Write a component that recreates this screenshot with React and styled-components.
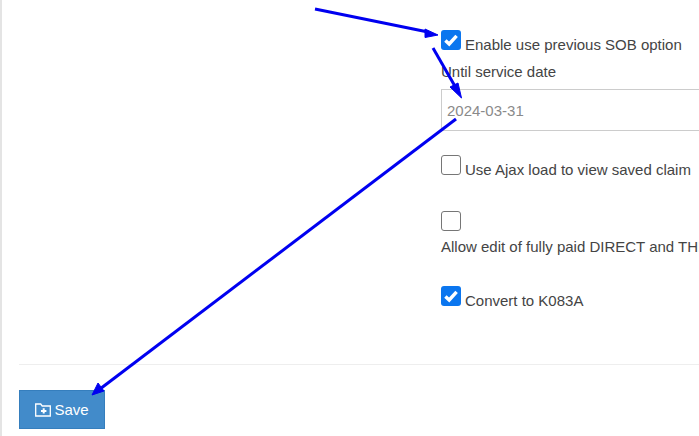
import React from "react";
import styled, { createGlobalStyle } from "styled-components";

const Global = createGlobalStyle`
  html, body { margin: 0; padding: 0; background: #fff; }
  body { width: 699px; height: 436px; overflow: hidden; font-family: "Liberation Sans", Arial, sans-serif; }
`;

const Page = styled.div`
  position: relative;
  box-sizing: border-box;
  width: 699px;
  height: 436px;
  overflow: hidden;
  border-left: 2px solid #e4e4e4;
  padding: 30px 0 0 17px;
  color: #444;
  font-size: 15px;
`;

const Form = styled.div`
  margin-left: 422px;
  height: 334px;
  box-sizing: border-box;
  width: 300px;
`;

const Row = styled.label`
  display: block;
  margin-bottom: ${(p) => p.$gap || 0}px;
  white-space: nowrap;
  line-height: 21px;
`;

const Box = styled.span`
  display: inline-block;
  box-sizing: border-box;
  width: 20px;
  height: 20px;
  border-radius: 3px;
  vertical-align: baseline;
  margin-right: 4px;
  background: ${(p) => (p.$on ? "#0b76ef" : "#fff")};
  border: ${(p) => (p.$on ? "none" : "1.5px solid #767676")};
  & svg { display: block; width: 20px; height: 20px; }
`;

const FieldLabel = styled.div`
  line-height: 21px;
  margin: 6px 0 7px;
`;

const DateInput = styled.div`
  box-sizing: border-box;
  width: 270px;
  height: 42px;
  border: 1px solid #ccc;
  border-right: none;
  padding: 0 5px;
  line-height: 41px;
  color: #8a8a8a;
  margin-bottom: 24px;
`;

const Divider = styled.div`
  height: 1px;
  background: #eee;
`;

const SaveButton = styled.button`
  display: flex;
  align-items: center;
  justify-content: center;
  gap: 3px;
  box-sizing: border-box;
  width: 86px;
  height: 39px;
  margin-top: 25px;
  background: #428bca;
  border: 1px solid #357ebd;
  color: #fff;
  font: 15px "Liberation Sans", Arial, sans-serif;
  padding: 0;
`;

const Arrows = styled.svg`
  position: absolute;
  left: -2px;
  top: 0;
  pointer-events: none;
`;

const Check = () => (
  <svg viewBox="0 0 20 20">
    <path d="M4.4 10.4 L8.2 14 L15.6 5.8" fill="none" stroke="#fff" strokeWidth="3.4" />
  </svg>
);

const FolderPlus = () => (
  <svg width="16" height="14" viewBox="0 0 16 14">
    <path d="M0.7 1h5l1.5 2h8.1v10H0.7z" fill="none" stroke="#fff" strokeWidth="1.3" />
    <path d="M8.7 5.2v5.4M6 7.9h5.4" stroke="#fff" strokeWidth="2" />
  </svg>
);

export default function App() {
  return (
    <Page>
      <Global />
      <Form>
        <Row>
          <Box $on><Check /></Box>Enable use previous SOB option
        </Row>
        <FieldLabel>Until service date</FieldLabel>
        <DateInput>2024-03-31</DateInput>
        <Row $gap={31}>
          <Box />Use Ajax load to view saved claim
        </Row>
        <Row $gap={29}>
          <Box /><br />Allow edit of fully paid DIRECT and THIRD PARTY claims
        </Row>
        <Row>
          <Box $on><Check /></Box>Convert to K083A
        </Row>
      </Form>
      <Divider />
      <SaveButton><FolderPlus />Save</SaveButton>
      <Arrows width="699" height="436" viewBox="0 0 699 436">
        <g stroke="#0000f0" strokeWidth="3" fill="#0000f0">
          <path d="M315 9 L428 32" />
          <path d="M438 35 L425 29 L425 37.5 Z" strokeWidth="1" />
          <path d="M433 48 L456 88" />
          <path d="M461.5 98 L450 87 L458 83 Z" strokeWidth="1" />
          <path d="M456 119 L100 389" />
          <path d="M92 395 L98 383 L104 391 Z" strokeWidth="1" />
        </g>
      </Arrows>
    </Page>
  );
}
